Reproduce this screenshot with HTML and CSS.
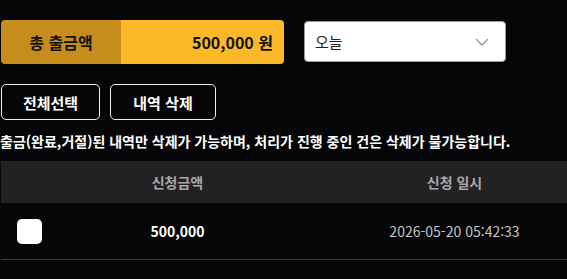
FILE: index.html
```html
<!DOCTYPE html>
<html lang="ko">
<head>
    <meta charset="UTF-8">
    <meta name="viewport" content="width=device-width, initial-scale=1.0">
    <title>출금내역</title>
    <link rel="stylesheet" href="styles.css">
</head>
<body>
    <div class="page">
        <div class="topRow">
            <div class="totalBox">
                <div class="totalLabel">총 출금액</div>
                <div class="totalValue">500,000 원</div>
            </div>
            <div class="periodSelect">
                <span>오늘</span>
                <svg class="chevron" width="14" height="8" viewBox="0 0 14 8">
                    <path d="M1 1 L7 7 L13 1" fill="none" stroke="#9a9a9a" stroke-width="1.4"/>
                </svg>
            </div>
        </div>

        <div class="btnRow">
            <button class="outlineBtn selectAll">전체선택</button>
            <button class="outlineBtn deleteBtn">내역 삭제</button>
        </div>

        <p class="notice">출금(완료,거절)된 내역만 삭제가 가능하며, 처리가 진행 중인 건은 삭제가 불가능합니다.</p>

        <div class="table">
            <div class="tableHead">
                <div class="cell"></div>
                <div class="cell">신청금액</div>
                <div class="cell date">신청 일시</div>
            </div>
            <div class="tableRow">
                <div class="cell"><span class="checkBox"></span></div>
                <div class="cell amount">500,000</div>
                <div class="cell date dateText">2026-05-20 05:42:33</div>
            </div>
        </div>
    </div>
</body>
</html>
```

FILE: styles.css
```css
body {
    margin: 0;
    background-color: #060608;
    font-family: "Noto Sans CJK KR", "Noto Sans", sans-serif;
    overflow: hidden;
}

.page {
    padding: 20px 0 0 1px;
}

.topRow {
    display: flex;
    align-items: flex-start;
    gap: 20px;
}

.totalBox {
    display: flex;
    width: 283px;
    height: 44px;
    border-radius: 4px;
    overflow: hidden;
}

.totalLabel {
    width: 120px;
    background-color: #c68d1d;
    color: #111;
    font-size: 16px;
    font-weight: 700;
    display: flex;
    align-items: center;
    justify-content: center;
}

.totalValue {
    flex: 1;
    background-color: #fbb92a;
    color: #111;
    font-size: 16px;
    font-weight: 700;
    display: flex;
    align-items: center;
    justify-content: flex-end;
    padding-right: 11px;
}

.periodSelect {
    width: 202px;
    height: 41px;
    margin-top: 1px;
    box-sizing: border-box;
    background-color: #fff;
    border: 1px solid #9a9a9a;
    border-radius: 4px;
    display: flex;
    align-items: center;
    justify-content: space-between;
    padding: 0 16px 0 10px;
    font-size: 15px;
    color: #222;
}

.btnRow {
    display: flex;
    gap: 10px;
    margin-top: 20px;
}

.outlineBtn {
    height: 36px;
    background-color: #060608;
    color: #fff;
    border: 1px solid #f0f0f0;
    border-radius: 5px;
    font-family: inherit;
    font-size: 15px;
    font-weight: 700;
    padding: 0;
}

.selectAll {
    width: 99px;
}

.deleteBtn {
    width: 106px;
}

.notice {
    margin: 10px 0 0 -1px;
    color: #fff;
    font-size: 14px;
    font-weight: 700;
    line-height: 22px;
    white-space: nowrap;
}

.table {
    margin-top: 9px;
}

.tableHead,
.tableRow {
    display: grid;
    grid-template-columns: 58px 237px 1fr;
    align-items: center;
}

.tableHead {
    height: 42px;
    background-color: #222224;
    color: #a8a8a8;
    font-size: 14px;
    font-weight: 700;
}

.tableRow {
    height: 56px;
    border-bottom: 1px solid #3c3c3e;
}

.cell {
    text-align: center;
}

.date {
    padding-left: 46px;
}

.checkBox {
    display: block;
    width: 25px;
    height: 25px;
    margin-left: 16px;
    background-color: #fff;
    border-radius: 5px;
}

.amount {
    color: #fff;
    font-size: 14px;
    font-weight: 700;
}

.dateText {
    color: #c4c4c4;
    font-size: 14px;
}
```
